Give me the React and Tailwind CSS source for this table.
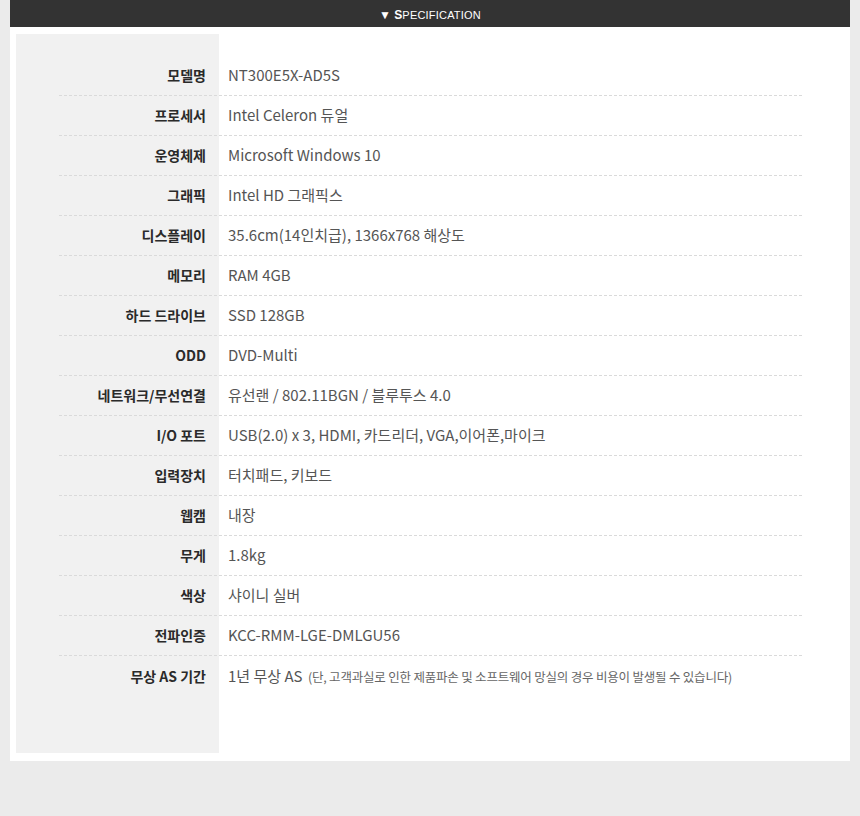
import React from "react";

const specs = [
  ["모델명", "NT300E5X-AD5S"],
  ["프로세서", "Intel Celeron 듀얼"],
  ["운영체제", "Microsoft Windows 10"],
  ["그래픽", "Intel HD 그래픽스"],
  ["디스플레이", "35.6cm(14인치급), 1366x768 해상도"],
  ["메모리", "RAM 4GB"],
  ["하드 드라이브", "SSD 128GB"],
  ["ODD", "DVD-Multi"],
  ["네트워크/무선연결", "유선랜 / 802.11BGN / 블루투스 4.0"],
  ["I/O 포트", "USB(2.0) x 3, HDMI, 카드리더, VGA,이어폰,마이크"],
  ["입력장치", "터치패드, 키보드"],
  ["웹캠", "내장"],
  ["무게", "1.8kg"],
  ["색상", "샤이니 실버"],
  ["전파인증", "KCC-RMM-LGE-DMLGU56"],
];

const SpecRow = ({ label, children, last }) => (
  <div
    className={
      "flex h-[40px] items-center " +
      (last ? "" : "border-b border-dashed border-[#dadada]")
    }
  >
    <div className="w-[160px] shrink-0 pr-[13px] text-right text-[14px] font-bold text-[#2a2a2a]">
      {label}
    </div>
    <div className="pl-[9px] text-[15px] text-[#555]">{children}</div>
  </div>
);

export default function App() {
  return (
    <div
      className="min-h-[816px] bg-[#ebebeb] px-[10px]"
      style={{ fontFamily: '"Noto Sans CJK KR", "Liberation Sans", sans-serif' }}
    >
      {/* title bar */}
      <div className="flex h-[27px] items-center justify-center bg-[#333333] pt-[3px] text-[11px] tracking-[0.2px] text-white" style={{ fontFamily: '"Liberation Sans", Arial, sans-serif' }}>
        <span className="mr-[3px] text-[12px]">▼</span>
        <span className="text-[12px] font-bold">S</span>
        <span>PECIFICATION</span>
      </div>

      {/* panel */}
      <div className="bg-white px-[6px] pt-[7px] pb-[8px]">
        <div className="bg-[linear-gradient(to_right,#f1f1f1_203px,#ffffff_203px)] pt-[22px] pb-[57px] pl-[43px] pr-[42px]">
          {specs.map(([k, v]) => (
            <SpecRow key={k} label={k}>
              {v}
            </SpecRow>
          ))}
          <SpecRow label="무상 AS 기간" last>
            1년 무상 AS{" "}
            <span className="ml-[2px] text-[12.5px] tracking-[-0.2px] text-[#666]">
              (단, 고객과실로 인한 제품파손 및 소프트웨어 망실의 경우 비용이 발생될 수 있습니다)
            </span>
          </SpecRow>
        </div>
      </div>
    </div>
  );
}
